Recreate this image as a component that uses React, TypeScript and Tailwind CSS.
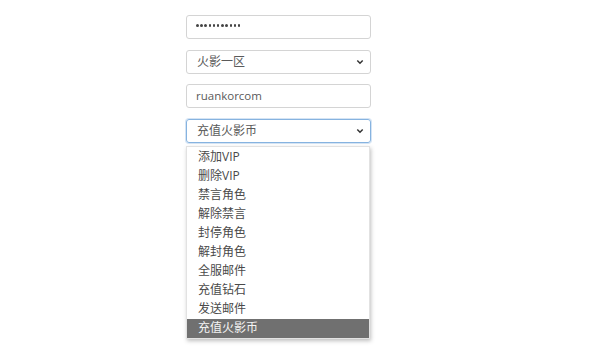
import React from 'react';

const options = ['添加VIP', '删除VIP', '禁言角色', '解除禁言', '封停角色', '解封角色', '全服邮件', '充值钻石', '发送邮件', '充值火影币'];

const Chevron = () => (
    <svg width="8" height="6" viewBox="0 0 8 6" className="shrink-0">
        <path d="M1.3 1.5 L4 4.2 L6.7 1.5" fill="none" stroke="#333" strokeWidth="1.5" />
    </svg>
);

const App = () => {
    return (
        <div className="w-[600px] h-[359px] bg-white overflow-hidden font-['Open_Sans','Noto_Sans_CJK_SC',sans-serif] text-[12px]">
            <div className="flex flex-col gap-[10.5px] pt-[15px] pl-[186px] w-[371px]">
                <div className="h-[24px] border border-[#d4d4d4] rounded-[3px] flex items-center gap-[1.7px] pl-[9px] pb-[3px]">
                    {Array.from({ length: 11 }).map((_, i) => (
                        <span key={i} className="w-[2.5px] h-[2.5px] rounded-full bg-[#444]" />
                    ))}
                </div>

                <div className="h-[24px] border border-[#d4d4d4] rounded-[3px] flex items-center justify-between pl-[10px] pr-[6px] text-[#5a5a5a]">
                    <span>火影一区</span>
                    <Chevron />
                </div>

                <div className="h-[24px] border border-[#d4d4d4] rounded-[3px] flex items-center pl-[9px] text-[#5a5a5a] text-[11.5px]">
                    ruankorcom
                </div>

                <div className="relative">
                    <div className="h-[24px] border border-[#86b3e0] rounded-[3px] shadow-[0_0_0_1px_rgba(134,179,224,0.35)] flex items-center justify-between pl-[10px] pr-[6px] text-[#5a5a5a]">
                        <span>充值火影币</span>
                        <Chevron />
                    </div>

                    <div className="absolute left-0 top-full mt-[3px] w-[184px] bg-white border border-[#e2e2e2] shadow-[1px_2px_4px_rgba(0,0,0,0.25)] pt-[1px]">
                        {options.map((o, i) => (
                            <div
                                key={o}
                                className={
                                    i === options.length - 1
                                        ? 'h-[19px] flex items-center pl-[11px] bg-[#707070] text-[#f4f4f4]'
                                        : 'h-[19px] flex items-center pl-[11px] text-[#4a4a4a]'
                                }
                            >
                                {o}
                            </div>
                        ))}
                    </div>
                </div>
            </div>
        </div>
    );
};

export default App;
